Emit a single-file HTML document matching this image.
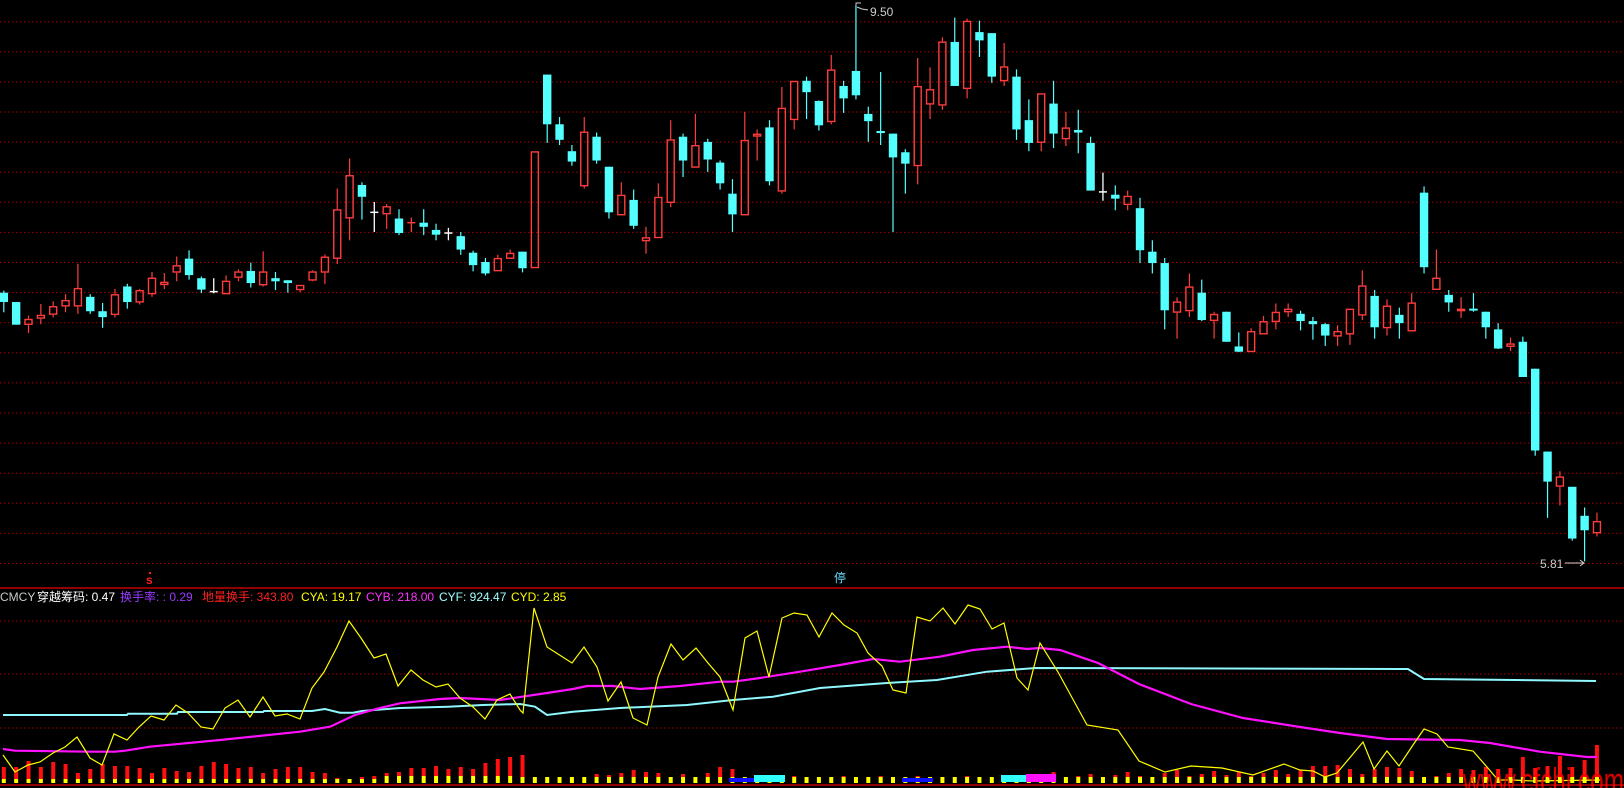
<!DOCTYPE html>
<html><head><meta charset="utf-8"><style>
html,body{margin:0;padding:0;background:#000;overflow:hidden}
svg{display:block}
text{font-family:"Liberation Sans","Noto Sans CJK SC",sans-serif}
</style></head><body>
<svg id="s" width="1624" height="788" viewBox="0 0 1624 788" xmlns="http://www.w3.org/2000/svg"></svg>
<script>
var S=1.0357,out=[];
function P(s){out.push(s);}
P('<rect width="1624" height="788" fill="#000"/>');
for(var k=0;k<19;k++){var y=(21.7+30.1*k).toFixed(1);P('<line x1="0" y1="'+y+'" x2="1624" y2="'+y+'" stroke="#a00000" stroke-width="1" stroke-dasharray="1.5 2.5"/>');}
[621,674,728].forEach(function(y){P('<line x1="0" y1="'+y+'" x2="1624" y2="'+y+'" stroke="#a00000" stroke-width="1" stroke-dasharray="1.5 2.5"/>');});
P('<line x1="0" y1="588" x2="1624" y2="588" stroke="#c00000" stroke-width="1.5"/>');
P('<line x1="0" y1="785" x2="1624" y2="785" stroke="#c00000" stroke-width="1.5"/>');
var C=[
[0,'c',282.6,291.6,280.6,301.5],[1,'c',291.6,313.5,291.6,313.5],[2,'r',307.8,313.8,304.8,321.5],[3,'r',303.9,307.8,293.5,313],[4,'r',295.5,304,290.9,306.5],[5,'r',289.6,296,284,301.5],[6,'r',278,296,254.6,303],[7,'c',286.6,300.5,284,303],[8,'c',300.5,306.2,292.5,316.5],[9,'r',284,304.2,279,306.5],[10,'c',276.6,291.6,274,298],[11,'r',280,292.2,279,294],[12,'r',268,284.2,262.6,286.6],[13,'r',272,275.3,263.6,279.2],[14,'r',256,263.3,247.7,271.6],[15,'c',249.7,265.6,241.7,270],[16,'c',268.6,279.6,267,283],[17,'w',281.6,281.6,268.6,283.2],[18,'r',271,284.2,266,284.2],[19,'r',262,268.3,260,271.6],[20,'c',261.6,273.3,253.6,277.6],[21,'r',262,275.6,242.7,276.6],[22,'c',268.6,271.6,262.6,280],[23,'c',270.6,273.3,270.6,282.6],[24,'r',275,280.2,275,282],[25,'r',262,271,261,271.6],[26,'r',247.7,263.3,245.7,274.3],[27,'r',202,250,182,255],[28,'r',169,211,153,232],[29,'c',178.6,190,176,212],[30,'w',205,205,195,224],[31,'r',199,207,197,221],[32,'c',211,225,202,227],[33,'x',215,215,210,224],[34,'c',215,219,202,227],[35,'c',222,226.6,216,232],[36,'w',225,225,220,232],[37,'c',228,241,224,246],[38,'c',244,256,242,262],[39,'c',253,264,249,266],[40,'r',249,262,246,262],[41,'r',244,250,241,250],[42,'c',243,259,243,263],[43,'r',146,259,146,259],[44,'c',72,120,72,138],[45,'c',120,135,113,140],[46,'c',146,156,140,160],[47,'r',127,180,113,182],[48,'c',132,155,128,158],[49,'c',161,205,161,211],[50,'r',188,208,176,208],[51,'c',193,218,183,221],[52,'r',229,233,219,245],[53,'r',190,230,177,230],[54,'r',134.5,196,116,200],[55,'c',132,155,129,171],[56,'r',140,162,110,162],[57,'c',137,154,134,166],[58,'c',157,177,155,183],[59,'c',187,207,173,224],[60,'r',135,208,108,208],[61,'r',129,132,125,155],[62,'c',123,175,116,179],[63,'r',104,185,84,187],[64,'r',78,116,78,125],[65,'c',78,89,74,115],[66,'c',97.5,121,97,126],[67,'r',67,118,53,120],[68,'c',83,95,78,109],[69,'c',68.5,92,5,96],[70,'c',110,117,103,137],[71,'c',126.5,128.5,69.5,140],[72,'c',129,152,129,224],[73,'c',147,158,144,187],[74,'r',83,160.5,56,178],[75,'r',86,101,65,115],[76,'r',40,102,36,106],[77,'c',40.5,83,17,83],[78,'r',20,86,18,95],[79,'c',31,39,20,55],[80,'c',32,74,32,80],[81,'r',64,78.5,41.5,83],[82,'c',74,125,67,135],[83,'c',116,138,96,146],[84,'r',90,138,90,146],[85,'c',100,129,78,143],[86,'r',123,134.5,108,141],[87,'c',125.5,128,106,148],[88,'c',138,184,132,184],[89,'w',185.3,185.3,166.7,193.8],[90,'c',188,191.8,179,203],[91,'r',189,198,184,203],[92,'c',201,241.6,191,254],[93,'c',243,254,232,264],[94,'c',254,299.6,249,318],[95,'r',291,302,287,327],[96,'r',276.5,300.6,264,306],[97,'c',282.6,309,270,310],[98,'r',303,310,301,327],[99,'c',301,330,301,330],[100,'c',334.5,339.6,321,340],[101,'r',319.6,340,317,340],[102,'r',310,323,305,323],[103,'r',301,311,293,318],[104,'r',298,301.6,293,306],[105,'c',303,310,300,319],[106,'c',310,313,306,328],[107,'c',313,324,312,334],[108,'r',319.6,325,314,334],[109,'r',298,323,298,333],[110,'r',275.5,304.7,261,309],[111,'c',285.7,316,280,327],[112,'r',295,317,289,324],[113,'c',304,312,297,327],[114,'r',292,320,283,320],[115,'c',186,258,180,264],[116,'r',268,280,241,280],[117,'c',284.7,292,280,301],[118,'r',298,300.6,287,307],[119,'c',298,299.6,283,301],[120,'c',301,316,301,327],[121,'c',318,336.5,312,337],[122,'r',331.5,335,326,339],[123,'c',330,364,325,364],[124,'c',356,435,356,440],[125,'c',436,465,436,500],[126,'r',460,470,455,488],[127,'c',470,520,470,522],[128,'c',498,512,490,542],[129,'r',503,515,495,518]];
var RED='#ff3c3c',CY='#54ffff';
function X(i){return 3.8+12.35*i;}
C.forEach(function(c){
 var x=X(c[0]),t=c[1],bt=c[2]*S,bb=c[3]*S,wt=c[4]*S,wb=c[5]*S,w=8.4;
 if(t=='w'||t=='x'){var col=t=='w'?'#fff':RED;
  P('<line x1="'+x+'" y1="'+wt+'" x2="'+x+'" y2="'+wb+'" stroke="'+col+'" stroke-width="1.3"/>');
  P('<line x1="'+(x-4)+'" y1="'+bt+'" x2="'+(x+4)+'" y2="'+bt+'" stroke="'+col+'" stroke-width="1.5"/>');return;}
 var h=Math.max(bb-bt,2);
 if(t=='c'){
  P('<line x1="'+x+'" y1="'+wt+'" x2="'+x+'" y2="'+wb+'" stroke="'+CY+'" stroke-width="1.2"/>');
  P('<rect x="'+(x-w/2)+'" y="'+bt+'" width="'+w+'" height="'+h+'" fill="'+CY+'"/>');
 }else{
  if(wt<bt)P('<line x1="'+x+'" y1="'+wt+'" x2="'+x+'" y2="'+bt+'" stroke="'+RED+'" stroke-width="1.2"/>');
  if(wb>bt+h)P('<line x1="'+x+'" y1="'+(bt+h)+'" x2="'+x+'" y2="'+wb+'" stroke="'+RED+'" stroke-width="1.2"/>');
  P('<rect x="'+(x-w/2+0.7)+'" y="'+(bt+0.7)+'" width="'+(w-1.4)+'" height="'+Math.max(h-1.4,1)+'" fill="none" stroke="'+RED+'" stroke-width="1.4"/>');
 }
});
P('<path d="M856 6 L856 3 L861 3 M857 7 L862 9 L868 10" stroke="#ccc" stroke-width="1" fill="none"/>');
P('<text x="870" y="16" font-size="12" fill="#ccc">9.50</text>');
P('<text x="1540" y="568" font-size="12" fill="#ccc">5.81</text>');
P('<path d="M1565 563 L1584 563 M1580 560 L1584 563 L1580 566" stroke="#ccc" stroke-width="1" fill="none"/>');
P('<text x="146" y="584" font-size="12" font-weight="bold" fill="#ff2020">s</text>');
P('<rect x="149" y="572" width="2" height="2" fill="#ff2020"/>');
P('<text x="834" y="582" font-size="12" fill="#66ddff">停</text>');
var L=[[0,'#c8c8c8','CMCY'],[37,'#ffffff','穿越筹码: 0.47'],[120,'#9a3cff','换手率: : 0.29'],[202,'#ff2020','地量换手: 343.80'],[301,'#ffff00','CYA: 19.17'],[366,'#ff30ff','CYB: 218.00'],[439,'#a0ffff','CYF: 924.47'],[511,'#ffff00','CYD: 2.85']];
L.forEach(function(l){P('<text x="'+l[0]+'" y="601" font-size="12" fill="'+l[1]+'">'+l[2]+'</text>');});
var vr=[767,767,761,767,762,764,773,769,764,766,766,768,773,768,771,772,766,762,764,768,767,773,769,767,767,772,773,778,779,777,776,773,772,768,768,766,769,767,769,763,759,757,
755,780,780,778,778,778,774,775,773,770,772,773,778,774,777,773,767,769,
778,776,778,778,776,778,778,778,776,778,778,776,778,778,776,778,778,778,776,778,778,778,778,778,
776,772,778,776,774,778,775,772,776,778,773,770,776,774,771,775,772,776,773,770,774,
770,766,766,765,769,774,769,767,768,771,778,776,773,769,770,767,769,768,757,768,766,756,767,760,745];
for(var i=0;i<vr.length&&i<130;i++){var x=X(i)-2;var yt=i<31?779:(i<42?776:777);
 if(vr[i]<yt)P('<rect x="'+x+'" y="'+vr[i]+'" width="4" height="'+(yt-vr[i])+'" fill="#ff1010"/>');
 P('<rect x="'+x+'" y="'+yt+'" width="4" height="'+(783-yt)+'" fill="#ffff00"/>');}
P('<rect x="729" y="778" width="31" height="4" fill="#1010ff"/><rect x="754" y="775" width="31" height="7" fill="#30ffff"/>');
P('<rect x="902" y="778" width="31" height="4" fill="#1010ff"/><rect x="1001" y="775" width="31" height="7" fill="#30ffff"/><rect x="1026" y="774" width="30" height="8" fill="#ff10ff"/>');
function pl(pts,col,w){P('<polyline points="'+pts+'" fill="none" stroke="'+col+'" stroke-width="'+w+'"/>');}
pl('3,715 127,715 128,713.7 177,713.7 178,712 263,712 264,711 312,711 325,709 340,712.7 353,712.7 362,711 400,708 448,706.7 483,705 520,704 535,706.7 547,715 573,711.7 620,708 687,705 733,700 773,696.7 820,688 887,683 937,680 987,671.7 1036,668 1408,669 1424,679 1596,681','#8ff8ff',2);
pl('3,749 15,750.7 90,751.7 115,751.7 125,750.7 150,746.7 220,740 300,731.7 330,726.7 355,715 380,708 400,703.3 440,699 460,698 500,700 547,693 573,689 587,686 613,686 640,689 680,686 720,681.7 733,681.7 760,678 800,671.7 840,665 873,659 900,661.7 940,656.7 973,650 1007,646.7 1027,649 1040,648 1060,650 1098,663 1139,684 1191,704 1243,718 1300,727 1340,733 1387,739 1460,740 1490,743 1540,751.7 1587,757 1597,757','#ff10ff',2.2);
pl('3,755 15,772 28,765 40,762 53,753 65,747 77,737 90,758 102,765 114,734 127,740 139,727 151,716 164,720 176,705 188,713 201,727 213,729 225,708 238,700 250,717 263,697 275,716 287,714 300,719 312,688 324,672 337,647 349,621 361,638 374,658 386,654 398,686 411,670 423,680 436,687 448,684 460,698 473,707 485,719 497,700 510,694 520,710 523,713 534,608 547,647 572,663 584,647 597,667 608,701 621,682 633,718 647,725 658,677 671,644 683,660 696,648 708,663 720,677 733,710 745,638 757,631 769,677 782,618 794,613 807,615 819,637 832,613 844,625 857,633 868,653 882,666 893,690 906,693 917,617 930,621 943,608 955,624 968,605 980,609 992,629 1004,623 1017,678 1028,690 1040,643 1058,672 1087,725 1118,730 1139,761 1165,772 1191,766 1222,768 1253,775 1284,764 1300,770 1313,771 1325,777 1337,773 1363,742 1374,769 1387,751 1399,766 1413,745 1424,729 1437,734 1448,747 1473,751 1487,767 1498,780 1513,780 1533,781 1600,780','#ffff00',1.2);
P('<text x="1463" y="793" font-size="36" fill="#ff0000" fill-opacity="0.85" textLength="161" lengthAdjust="spacingAndGlyphs">www.cfchi.com</text>');
document.getElementById('s').innerHTML=out.join('');
</script>
</body></html>
